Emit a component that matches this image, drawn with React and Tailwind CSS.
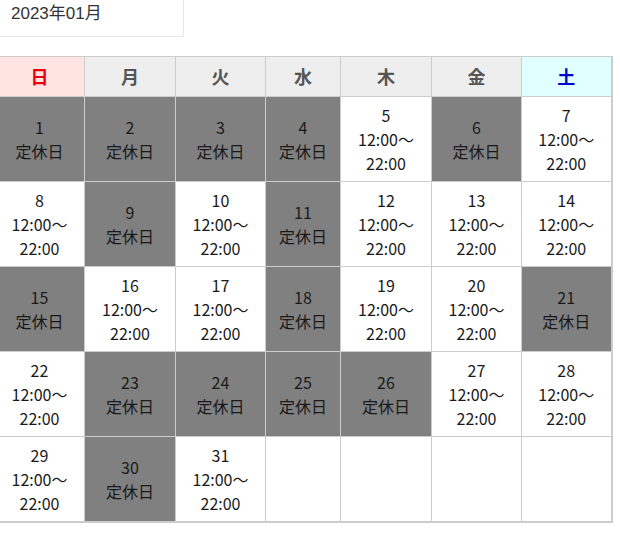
import React from 'react';

const days = ['日', '月', '火', '水', '木', '金', '土'];
const colWidths = ['w-[90px]', 'w-[91px]', 'w-[90px]', 'w-[75px]', 'w-[91px]', 'w-[90px]', 'w-[90px]'];
const closed = [1, 2, 3, 4, 6, 9, 11, 15, 18, 21, 23, 24, 25, 26, 30];

// January 2023 starts on a Sunday
const weeks = [];
for (let w = 0; w < 5; w++) {
  const row = [];
  for (let d = 0; d < 7; d++) {
    const n = w * 7 + d + 1;
    row.push(n <= 31 ? n : null);
  }
  weeks.push(row);
}

const headClass = (i) => {
  if (i === 0) return 'bg-[#ffe4e1] text-[#e60012]';
  if (i === 6) return 'bg-[#e0ffff] text-[#0000cc]';
  return 'bg-[#eeeeee] text-[#555555]';
};

const DayCell = ({ n }) => {
  if (!n) return <td className="border border-[#cccccc] bg-white h-[85px]"></td>;
  const off = closed.includes(n);
  return (
    <td
      className={`border border-[#cccccc] h-[85px] text-center align-middle text-[16px] leading-[24px] text-[#1a1a1a] ${
        off ? 'bg-[#808080]' : 'bg-white'
      }`}
    >
      <div>{n}</div>
      {off ? (
        <div>定休日</div>
      ) : (
        <>
          <div>12:00〜</div>
          <div>22:00</div>
        </>
      )}
    </td>
  );
};

export default function App() {
  return (
    <div className="w-[620px] h-[550px] bg-white overflow-hidden font-['Noto_Sans_CJK_JP','Noto_Sans',sans-serif]">
      <div className="w-[184px] h-[37px] border-r border-b border-[#e8e8e8] pl-[11px] text-[17px] leading-[28px] text-[#333333] font-['Liberation_Sans','Noto_Sans_CJK_JP',sans-serif]">
        2023年01月
      </div>

      <table className="table-fixed border-collapse w-[618px] -ml-[6px] mt-[19px] border-r-2 border-b-2 border-[#cccccc]">
        <colgroup>
          {colWidths.map((w, i) => (
            <col key={i} className={w} />
          ))}
        </colgroup>
        <thead>
          <tr>
            {days.map((d, i) => (
              <th
                key={d}
                className={`border border-[#cccccc] h-[40px] text-center align-middle text-[18px] font-bold ${headClass(i)}`}
              >
                {d}
              </th>
            ))}
          </tr>
        </thead>
        <tbody>
          {weeks.map((row, w) => (
            <tr key={w}>
              {row.map((n, d) => (
                <DayCell key={d} n={n} />
              ))}
            </tr>
          ))}
        </tbody>
      </table>
    </div>
  );
}
